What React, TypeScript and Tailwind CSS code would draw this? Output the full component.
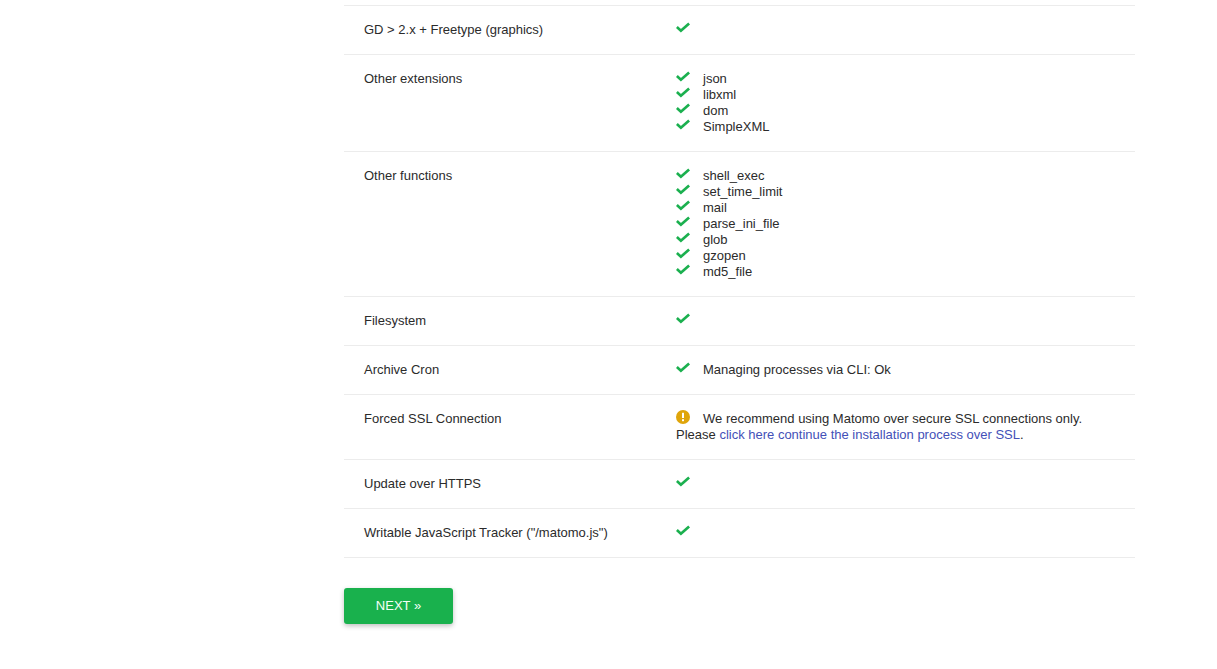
const CheckIcon = () => (
  <svg viewBox="0 0 16 12" className="inline-block w-[14px] h-[11px] align-[1px] mr-[13px]" aria-hidden="true">
    <path d="M1 5.4 L5.6 9.6 L15 1.4" fill="none" stroke="#1bb04f" strokeWidth="3.1" />
  </svg>
)

const WarningIcon = () => (
  <svg viewBox="0 0 14 14" className="inline-block w-[14px] h-[14px] align-top -mt-[1px] mr-[13px]" aria-hidden="true">
    <circle cx="7" cy="7" r="7" fill="#dfa50b" />
    <rect x="6" y="2.8" width="2" height="5.2" fill="#fff" />
    <rect x="6" y="9.2" width="2" height="2" fill="#fff" />
  </svg>
)

const CheckList = ({ items }: { items: string[] }) => (
  <>
    {items.map((item) => (
      <div key={item} className="h-4 whitespace-nowrap">
        <CheckIcon />
        {item}
      </div>
    ))}
  </>
)

const rowClass = 'flex border-b border-[#ececec] py-4'
const labelClass = 'w-[332px] pl-5 shrink-0'

export default function App() {
  return (
    <div className="min-h-[669px] bg-white pt-[5px] text-[13px] leading-4 text-[#2b2b2b] font-['Liberation_Sans',Arial,sans-serif]">
      <div className="w-[791px] ml-[344px]">
        <div className="border-t border-[#ececec]">
          <div className={rowClass}>
            <div className={labelClass}>GD &gt; 2.x + Freetype (graphics)</div>
            <div><CheckIcon /></div>
          </div>
          <div className={rowClass}>
            <div className={labelClass}>Other extensions</div>
            <div><CheckList items={['json', 'libxml', 'dom', 'SimpleXML']} /></div>
          </div>
          <div className={rowClass}>
            <div className={labelClass}>Other functions</div>
            <div>
              <CheckList items={['shell_exec', 'set_time_limit', 'mail', 'parse_ini_file', 'glob', 'gzopen', 'md5_file']} />
            </div>
          </div>
          <div className={rowClass}>
            <div className={labelClass}>Filesystem</div>
            <div><CheckIcon /></div>
          </div>
          <div className={rowClass}>
            <div className={labelClass}>Archive Cron</div>
            <div><CheckIcon />Managing processes via CLI: Ok</div>
          </div>
          <div className={rowClass}>
            <div className={labelClass}>Forced SSL Connection</div>
            <div>
              <WarningIcon />We recommend using Matomo over secure SSL connections only.
              <br />
              Please <a href="#" className="text-[#4350b8]">click here continue the installation process over SSL</a>.
            </div>
          </div>
          <div className={rowClass}>
            <div className={labelClass}>Update over HTTPS</div>
            <div><CheckIcon /></div>
          </div>
          <div className={rowClass}>
            <div className={labelClass}>Writable JavaScript Tracker ("/matomo.js")</div>
            <div><CheckIcon /></div>
          </div>
        </div>
        <button
          type="button"
          className="mt-[30px] w-[109px] h-9 rounded-[3px] bg-[#19b14d] text-[#f4fff7] text-[13px] shadow-[0_2px_5px_rgba(0,0,0,0.25)]"
        >
          NEXT »
        </button>
      </div>
    </div>
  )
}
